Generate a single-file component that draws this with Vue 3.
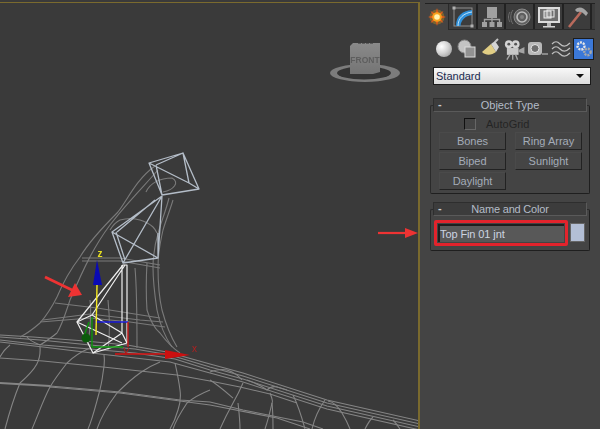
<template>
  <div class="app">
    <div class="viewport">
      <svg class="scene" width="418" height="426" viewBox="0 3 418 426">
        <defs>
          <linearGradient id="cube" x1="0" y1="0" x2="0" y2="1"><stop offset="0" stop-color="#8a8a8a"/><stop offset="1" stop-color="#747474"/></linearGradient>
        </defs>
        <!-- view cube -->
        <ellipse cx="365" cy="73" rx="35" ry="9" fill="#7c7c7c"/>
        <ellipse cx="364" cy="73" rx="27" ry="6.500" fill="#333"/>
        <path d="M353 43 L380 43 L380 72 L373 74 L350 74 L350 46 Z" fill="url(#cube)"/>
        <path d="M358 43.500 H374" stroke="#5c5c5c" stroke-dasharray="3 1" fill="none"/>
        <text x="365" y="63" class="front">FRONT</text>

        <!-- body mesh -->
        <g fill="none" stroke="#858585" stroke-width="1.100">
          <path d="M0 335 L33 337 L85 341 L127 345 L167 352 L210 364 L243 373 L327 400 L420 421"/>
          <path d="M0 337 L40 340 L90 345 L135 349 L170 355 L210 367 L243 376 L327 403 L420 424"/>
          <path d="M0 340 L43 345 L90 349 L135 353 L175 359 L210 370 L243 379 L327 406 L420 427"/>
          <path d="M0 342 L43 347 L100 354 L170 362 L210 373 L243 382 L327 409 L420 430"/>
          <path d="M0 358 L43 361 L103 367 L177 375 L210 381 L240 387 L270 394 L297 403"/>
          <path stroke-width="2" d="M0 383 L50 386"/>
          <path d="M50 386 L120 392 L180 400 L210 402 L243 410 L303 422 L323 429"/>
          <path d="M50 387 L120 393 L180 401 L210 405 L277 418 L310 429"/>
          <path d="M40 347 C41 360 37 368 20 383 C15 395 10 410 5 429"/>
          <path d="M10 345 C5 349 2 353 0 357"/>
          <path d="M27 337 C30 341 35 343 40 345 C47 341 52 337 57 333"/>
          <path d="M90 348 C78 353 72 358 67 363 C60 372 54 380 50 387 C44 398 38 415 32 429"/>
          <path d="M104 355 C105 362 104 368 103 373 C102 382 100 390 98 397 C95 408 92 420 88 429"/>
          <path d="M160 362 C150 366 146 369 140 373 C130 380 122 388 117 393 C108 405 100 420 97 429"/>
          <path d="M175 363 C177 372 179 382 180 390 C181 397 180 404 178 410 C176 417 173 424 170 429"/>
          <path d="M210 390 C200 394 193 398 187 403 C181 412 176 420 173 429"/>
          <path d="M243 383 C240 390 237 396 233 403 C228 412 224 420 220 429"/>
          <path d="M238 403 C239 412 240 420 240 429"/>
          <path d="M210 380 C218 385 226 392 233 398"/>
          <path d="M210 372 C215 370 222 369 227 370 C233 372 238 375 242 380"/>
          <path d="M247 380 C255 383 262 386 267 390 C270 387 273 386 277 387 C281 388 284 389 287 390"/>
          <path d="M270 393 C272 398 273 402 272 403 C270 412 268 420 265 429"/>
          <path d="M272 403 C273 412 273 420 273 429"/>
          <path d="M293 395 C298 405 302 418 305 429"/>
          <path d="M325 400 C318 410 314 420 312 429"/>
          <path d="M328 401 C335 402 339 408 342 413 C345 418 348 424 350 429"/>
          <path d="M373 417 C370 420 367 425 365 429"/>
          <path d="M393 420 C396 423 398 426 400 429"/>
        </g>
        <!-- fin mesh -->
        <g fill="none" stroke="#7a7a7a" stroke-width="1.100">
          <path d="M155 166 C135 180 125 205 117 213 C105 225 90 240 80 257 C70 270 62 285 57 297 C52 307 46 316 40 323 C32 330 26 334 20 337"/>
          <path d="M158 170 C145 185 125 205 110 225 C95 245 85 265 70 300 C65 315 62 325 57 333"/>
          <path d="M173 200 C170 210 166 220 163 230 C160 243 158 255 158 267 C158 283 159 297 162 310 C166 325 171 337 177 347"/>
          <path d="M169 198 C166 210 162 220 159 230 C155 243 153 255 153 267 C153 283 155 297 157 310 C160 325 165 337 172 347"/>
          <path d="M147 263 C146 280 146 295 147 310 C150 320 154 328 160 333 C166 341 174 349 180 353"/>
          <path d="M146 192 C150 183 160 178 172 178 C180 182 174 190 163 192"/>
          <path d="M110 230 C113 225 116 222 120 220 C127 218 134 218 140 220 C146 222 150 224 153 227 C155 229 156 231 157 233"/>
          <path d="M82 258 L120 258 L160 265"/>
          <path d="M82 261 L120 261 L160 268"/>
          <path d="M55 303 L97 308 L160 318"/>
          <path d="M43 320 L90 314 L140 320 L163 322"/>
          <path d="M40 322 L90 318 L130 322 L165 327"/>
          <path d="M90 300 C92 315 90 330 88 345"/>
          <path d="M108 300 C110 320 110 335 108 350"/>
          <path d="M135 268 C137 290 137 320 137 348"/>
        </g>
        <!-- bones -->
        <g fill="none" stroke="#b4bdc8" stroke-width="1.300" stroke-linejoin="round">
          <path d="M149 163 L183 153 L199 189 L162 195 Z M149 163 L189 183 M156 165 L183 153 M156 165 L162 195 M183 153 L189 183 L199 189"/>
          <path d="M162 196 L112 232 L123 263 L158 258 L162 196 M112 232 L158 258 M162 196 L123 263 M155 200 L117 232 M116 232 L125 260 M158 233 L158 258"/>
        </g>
        <g fill="none" stroke="#eeeeee" stroke-width="1.200" stroke-linejoin="round">
          <path d="M123 265 L77 322 L93 353 L127 343 V265 Z"/>
          <path d="M125 265 L92 315 L77 322 M92 315 L122 333 L127 343 M77 322 L122 343 M93 353 L122 333 L122 265"/>
        </g>
        <!-- transform gizmo -->
        <g fill="none" stroke-width="1.400">
          <path d="M95 322 H128" stroke="#1818d8"/>
          <path d="M128 322 V347" stroke="#c81818"/>
          <path d="M97 285 L96 335" stroke="#f4e820"/>
          <path d="M92 317 V347 H123 M84 336 L89 322" stroke="#0c960c"/>
          <path d="M115 354 H168" stroke="#d81010"/>
          <path d="M124 348 L126 354 L129 348" stroke="#b01818" stroke-width="1"/>
        </g>
        <path d="M97 260 L93 285 H102 Z" fill="#0a0ab4"/>
        <path d="M165 350 L190 355 L165 359 Z" fill="#cc1010"/>
        <circle cx="86" cy="338" r="4.500" fill="#0c5a0c"/>
        <text x="97.500" y="257" class="axis z">z</text>
        <text x="192" y="352" class="axis x">x</text>

        <!-- callout arrows -->
        <path d="M45 277 L74 291" stroke="#ee3333" stroke-width="2.800" fill="none"/>
        <path d="M82 295 L68 297 L75 283 Z" fill="#ee3333"/>
        <path d="M378 233 H408" stroke="#ee3333" stroke-width="2.200" fill="none"/>
        <path d="M418 233 L405 228 V238 Z" fill="#ee3333"/>
      </svg>
    </div>

    <aside class="panel">
      <nav class="tabs">
        <div class="tab active">
          <svg width="20" height="20" viewBox="0 0 20 20"><circle cx="10" cy="10" r="7.500" fill="#ffb000" opacity=".3"/><path d="M10 1 L11.500 7 L16.500 4 L13.500 8.500 L19 10 L13.500 11.500 L16.500 16 L11.500 13 L10 19 L8.500 13 L3.500 16 L6.500 11.500 L1 10 L6.500 8.500 L3.500 4 L8.500 7 Z" fill="#e8591a"/><circle cx="10" cy="10" r="4.800" fill="#f7a21c"/><circle cx="10" cy="10" r="2.800" fill="#fff4b0"/></svg>
        </div>
        <div class="tab">
          <svg width="22" height="22" viewBox="0 0 22 22"><rect x="2" y="2" width="18" height="18" fill="none" stroke="#8f8f8f"/><rect x="0.500" y="0.500" width="3" height="3" fill="#b0b0b0"/><rect x="18.500" y="18.500" width="3" height="3" fill="#b0b0b0"/><path d="M4 20 C4 10 10 5 20 4 V9 C13 10 9 14 8.500 20 Z" fill="#2f8fd8"/><path d="M6 20 C6 12 12 7 20 6" fill="none" stroke="#bfe4fb"/></svg>
        </div>
        <div class="tab">
          <svg width="22" height="22" viewBox="0 0 22 22" fill="#a0a0a0"><rect x="6" y="1" width="10" height="11"/><rect x="1" y="16" width="5" height="5"/><rect x="8.500" y="16" width="5" height="5"/><rect x="16" y="16" width="5" height="5"/><path d="M3.500 16 V13.500 H18.500 V16 M11 12 V16" fill="none" stroke="#a0a0a0" stroke-width="1.400"/></svg>
        </div>
        <div class="tab">
          <svg width="24" height="20" viewBox="0 0 24 20" fill="none"><circle cx="14" cy="10" r="8" fill="#5f5f5f" stroke="#8a8a8a"/><circle cx="14" cy="10" r="5" stroke="#bcbcbc" stroke-width="1.600"/><circle cx="14" cy="10" r="2" fill="#808080"/><path d="M5 3 C2 7 2 13 5 17 M2 5 C0 8 0 12 2 15" stroke="#707070"/></svg>
        </div>
        <div class="tab">
          <svg width="24" height="22" viewBox="0 0 24 22" fill="none"><rect x="1" y="1" width="22" height="16" fill="#dcdcdc"/><rect x="3" y="3" width="18" height="12" fill="#6e6e6e"/><rect x="7" y="5" width="7" height="7" fill="#949494" stroke="#eee"/><rect x="10" y="4" width="7" height="7" fill="none" stroke="#eee"/><rect x="10" y="17" width="4" height="3" fill="#b4b4b4"/><rect x="6" y="20" width="12" height="1.500" fill="#d4d4d4"/></svg>
        </div>
        <div class="tab">
          <svg width="24" height="24" viewBox="0 0 24 24"><path d="M3 22 L15 7" stroke="#b96a5c" stroke-width="2.600"/><path d="M9 5 C13 1 17 2 22 8 L20 11 C17 7 14 6 11 7 Z" fill="#a4a4a4"/></svg>
        </div>
      </nav>

      <div class="subicons">
        <span class="sub"><i class="sphere"></i></span>
        <span class="sub">
          <svg width="22" height="22" viewBox="0 0 22 22"><circle cx="8.500" cy="8.500" r="6.500" fill="#c4c4c4" stroke="#888"/><rect x="9" y="9" width="10" height="10" fill="#929292" stroke="#dcdcdc"/></svg>
        </span>
        <span class="sub">
          <svg width="22" height="22" viewBox="0 0 22 22"><path d="M3 14 L12 6 L17 14 C13 17 7 18 3 14 Z" fill="#e0cd84"/><path d="M12 6 L16 3 L20 9 L17 14 Z" fill="#d4d4d4"/><path d="M16 4 L19 1" stroke="#c4c4c4" stroke-width="2"/></svg>
        </span>
        <span class="sub">
          <svg width="24" height="22" viewBox="0 0 24 22"><circle cx="7" cy="6" r="4" fill="#d4d4d4"/><circle cx="14" cy="6" r="4" fill="#d4d4d4"/><circle cx="7" cy="6" r="1.500" fill="#555"/><circle cx="14" cy="6" r="1.500" fill="#555"/><rect x="5" y="10" width="12" height="7" fill="#c8c8c8"/><path d="M17 12 L23 9 V16 L17 14 Z" fill="#a4a4a4"/><path d="M8 17 L5 22 M14 17 L16 22 M11 17 V22" stroke="#a4a4a4" stroke-width="1.400"/></svg>
        </span>
        <span class="sub">
          <svg width="22" height="22" viewBox="0 0 22 22" fill="none"><rect x="2" y="4" width="14" height="13" rx="3" fill="#b8b8b8"/><circle cx="9" cy="10.500" r="4" fill="#6e6e6e" stroke="#e6e6e6"/><path d="M16 16 H22" stroke="#a0a0a0" stroke-width="1.500"/></svg>
        </span>
        <span class="sub">
          <svg width="20" height="20" viewBox="0 0 20 20" fill="none" stroke="#c0c0c0" stroke-width="1.200"><path d="M1 5 C4 2 6 2 9 5 S15 8 19 4"/><path d="M1 10 C4 7 6 7 9 10 S15 13 19 9"/><path d="M1 15 C4 12 6 12 9 15 S15 18 19 14"/></svg>
        </span>
        <span class="sub systems">
          <svg width="18" height="18" viewBox="0 0 18 18"><circle cx="6" cy="6" r="3.500" fill="none" stroke="#e6e6e6" stroke-width="2.400" stroke-dasharray="2 1"/><circle cx="12.500" cy="12" r="3.200" fill="none" stroke="#a8a8a8" stroke-width="2.400" stroke-dasharray="2 1"/></svg>
        </span>
      </div>

      <div class="dropdown">
        <span>Standard</span>
        <i class="caret"></i>
      </div>

      <section class="rollout first">
        <header class="rhead"><b>-</b><span>Object Type</span></header>
        <div class="rbody">
          <label class="autogrid"><i class="check"></i><span>AutoGrid</span></label>
          <div class="btns">
            <button>Bones</button>
            <button>Ring Array</button>
            <button>Biped</button>
            <button>Sunlight</button>
            <button>Daylight</button>
          </div>
        </div>
      </section>

      <section class="rollout">
        <header class="rhead"><b>-</b><span class="tight">Name and Color</span></header>
        <div class="rbody namebody">
          <div class="highlight"><div class="field">Top Fin 01 jnt</div></div>
          <i class="swatch"></i>
        </div>
      </section>
    </aside>
  </div>
</template>

<script setup>
</script>

<style>
html, body { margin: 0; background: #444; }
</style>

<style scoped>
.app {
  width: 600px;
  height: 429px;
  display: flex;
  overflow: hidden;
  font-family: "Liberation Sans", Arial, sans-serif;
}
.viewport {
  width: 420px;
  height: 429px;
  box-sizing: border-box;
  padding-top: 2px;
  background: #3a3a3a;
  flex: none;
}
.scene {
  display: block;
  box-sizing: content-box;
  border-top: 1px solid #7a6a2e;
  border-right: 2px solid #7a6a2e;
  filter: blur(0.3px);
}
.front {
  font: bold 8.500px "Liberation Sans", sans-serif;
  fill: #5e5e5e;
  text-anchor: middle;
}
.axis { font: 10px "Liberation Sans", sans-serif; }
.axis.z { fill: #e8e020; font-weight: bold; }
.axis.x { fill: #b02020; }

.panel {
  width: 180px;
  background: #444;
  box-sizing: border-box;
  padding: 0 0 0 10px;
  display: flex;
  flex-direction: column;
  align-items: flex-start;
}
.tabs {
  display: flex;
  height: 25px;
  margin-top: 3px;
  margin-left: -5px;
  gap: 1px;
  width: 170px;
  background: #3c3c3c;
  border-top: 1px solid #222;
  border-bottom: 1px solid #2a2a2a;
}
.tab {
  width: 27.700px;
  height: 25px;
  flex: none;
  display: flex;
  align-items: center;
  justify-content: center;
  border-right: 2px solid #222;
  box-sizing: border-box;
}
.tab.active {
  background: #444;
  height: 26px;
  width: 24px;
  border-right: 1px solid #2a2a2a;
}
.subicons {
  display: flex;
  align-items: center;
  margin-top: 7px;
  height: 23px;
  margin-left: 2px;
}
.sub {
  width: 23.400px;
  height: 22px;
  display: flex;
  align-items: center;
  justify-content: center;
}
.sphere {
  display: block;
  width: 16px;
  height: 16px;
  border-radius: 50%;
  background: radial-gradient(circle at 35% 35%, #fff, #d4d4d4 45%, #8c8c8c);
}
.systems {
  width: 21px;
  height: 22px;
  box-sizing: border-box;
  background: #3b78d8;
  border: 1px solid #1c1c1c;
  margin-left: 1px;
}
.dropdown {
  width: 158px;
  height: 18px;
  box-sizing: border-box;
  margin-top: 7px;
  margin-left: 3px;
  background: linear-gradient(#f8f8f8, #dcdcdc);
  border: 1px solid #1a1a1a;
  display: flex;
  align-items: center;
  justify-content: space-between;
  padding: 0 6px 0 2px;
  font-size: 11px;
  color: #1a2a50;
}
.caret {
  border-left: 4px solid transparent;
  border-right: 4px solid transparent;
  border-top: 4px solid #111;
}
.rollout {
  position: relative;
  width: 160px;
  margin-top: 8px;
}
.rollout.first { margin-top: 13px; }
.rhead {
  position: relative;
  z-index: 1;
  width: 154px;
  height: 14px;
  margin-left: 3px;
  box-sizing: border-box;
  background: #3c3c3c;
  border: 1px solid #2e2e2e;
  border-right-color: #5a5a5a;
  border-bottom-color: #5a5a5a;
  display: flex;
  align-items: center;
  justify-content: center;
  font-size: 11px;
  color: #b4bcc8;
}
.tight { letter-spacing: -0.2px; }
.rhead b {
  position: absolute;
  left: 4px;
  top: -1px;
  font-weight: bold;
  color: #ccc;
}
.rbody {
  margin-top: -7px;
  border: 1px solid #2a2a2a;
  border-right-color: #1f1f1f;
  border-bottom-color: #1f1f1f;
  box-sizing: border-box;
  padding: 11px 8px 3px;
  border-radius: 2px;
}
.autogrid {
  display: flex;
  align-items: center;
  gap: 10px;
  padding-left: 25px;
  height: 14px;
  font-size: 11px;
  color: #242424;
}
.check {
  width: 10px;
  height: 10px;
  border: 1px solid #111;
  border-right-color: #666;
  border-bottom-color: #666;
  background: #444;
}
.btns {
  display: grid;
  grid-template-columns: 67px 67px;
  column-gap: 9px;
  row-gap: 2px;
  margin-top: 1px;
}
button {
  height: 18px;
  padding: 0;
  background: #454545;
  border: 1px solid #4a4a4a;
  border-right-color: #222;
  border-bottom-color: #222;
  border-radius: 0;
  color: #a4acb8;
  font: 11px "Liberation Sans", sans-serif;
}
.namebody {
  display: flex;
  align-items: center;
  gap: 2px;
  padding: 9px 3px 4px 3px;
  height: 42px;
}
.highlight {
  width: 134px;
  height: 26px;
  box-sizing: border-box;
  border: 3px solid #e3232c;
  border-radius: 2px;
  padding: 1px;
  background: #444;
}
.field {
  height: 18px;
  box-sizing: border-box;
  background: #585858;
  border-top: 2px solid #1e1e1e;
  border-left: 2px solid #1e1e1e;
  color: #ccd4e2;
  font-size: 11px;
  line-height: 16px;
  letter-spacing: -0.1px;
}
.swatch {
  width: 15px;
  height: 19px;
  background: #b3bfd6;
  border: 1px solid #666;
  box-sizing: border-box;
}
</style>
